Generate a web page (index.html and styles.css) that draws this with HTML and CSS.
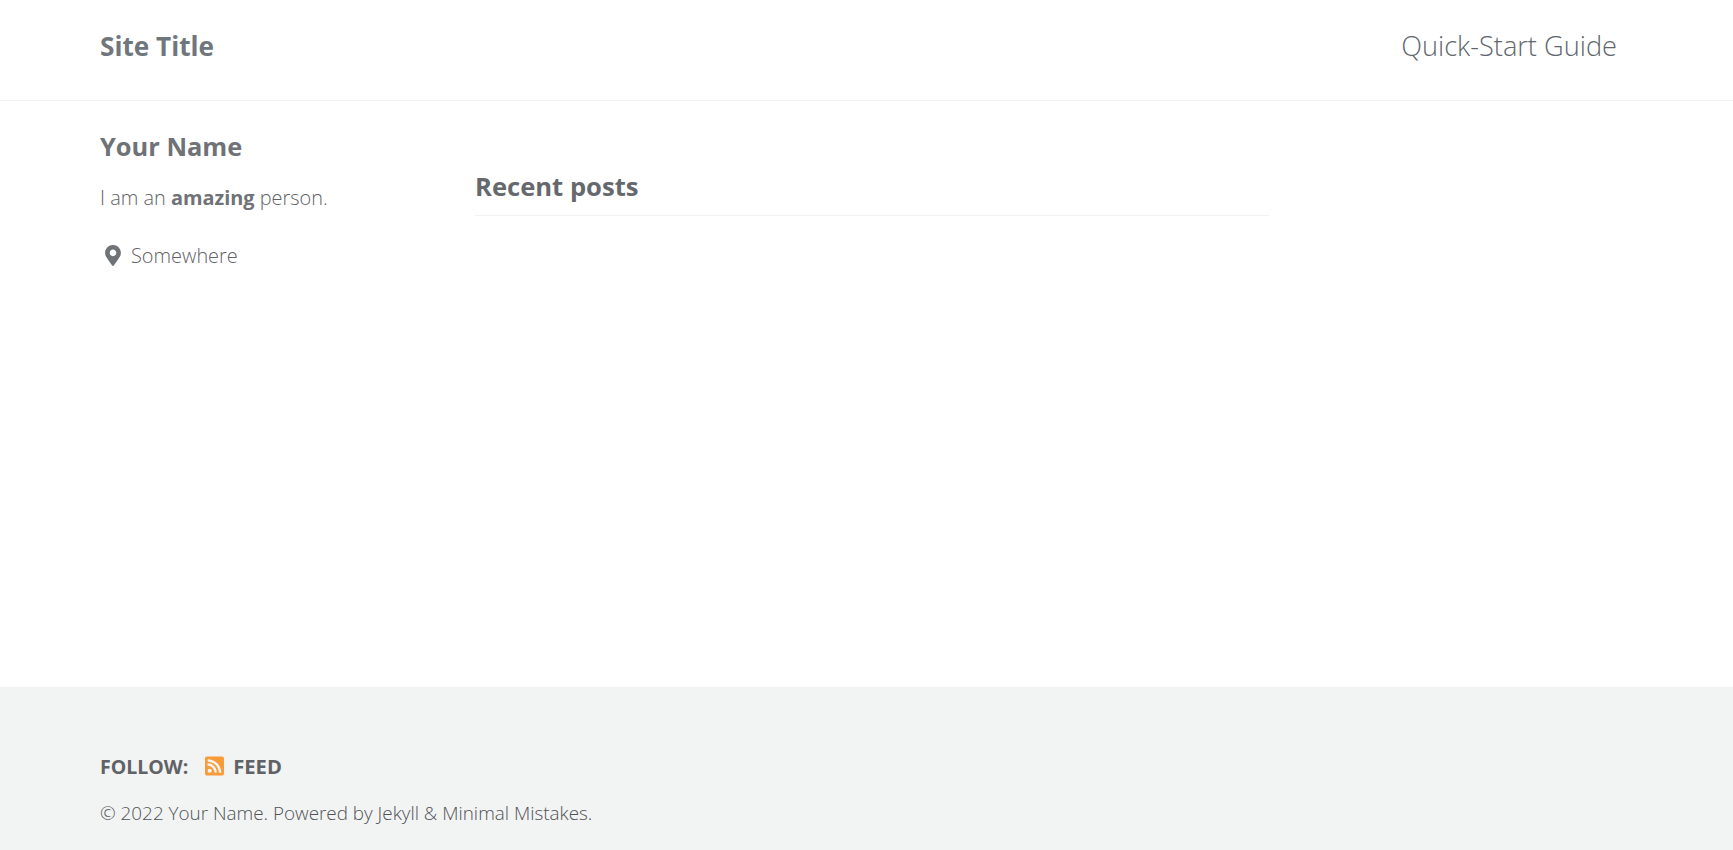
FILE: index.html
```html
<!DOCTYPE html>
<html lang="en">
<head>
<meta charset="utf-8">
<title>Your Name</title>
<link rel="stylesheet" href="styles.css">
</head>
<body>
<header class="masthead">
  <a class="site-title" href="#">Site Title</a>
  <a class="nav-link" href="#">Quick-Start Guide</a>
</header>
<div class="content">
  <aside class="sidebar">
    <h3 class="author-name">Your Name</h3>
    <p class="author-bio">I am an <strong>amazing</strong> person.</p>
    <div class="author-location">
      <svg class="pin" viewBox="0 0 384 512" aria-hidden="true"><path d="M172.3 501.7C27 291 0 269.4 0 192 0 86 86 0 192 0s192 86 192 192c0 77.400-27 99-172.300 309.700-9.500 13.800-29.900 13.800-39.400 0zM192 272c44.200 0 80-35.800 80-80s-35.800-80-80-80-80 35.800-80 80 35.800 80 80 80z"/></svg>
      <span>Somewhere</span>
    </div>
  </aside>
  <main class="main">
    <h3 class="section-title">Recent posts</h3>
  </main>
</div>
<footer class="footer">
  <div class="follow">
    <strong class="follow-label">FOLLOW:</strong>
    <a class="feed" href="#">
      <svg class="rss" viewBox="0 0 448 512" aria-hidden="true"><path d="M400 32H48C21.500 32 0 53.500 0 80v352c0 26.500 21.500 48 48 48h352c26.500 0 48-21.500 48-48V80c0-26.500-21.500-48-48-48zM112 416c-26.500 0-48-21.500-48-48s21.500-48 48-48 48 21.500 48 48-21.500 48-48 48zm157.500 0h-34.300c-6.400 0-11.700-5-12-11.400-5.200-82.400-70.900-147.800-153.100-153.100-6.400-.3-11.400-5.600-11.400-12v-34.300c0-6.900 5.800-12.400 12.700-12 111.300 6 200.100 95 206.100 206.100.4 6.900-5.100 12.700-12 12.700zm103 0h-34.300c-6.500 0-11.800-5.200-12-11.600C321.200 268.700 211.300 158.800 75.600 153.800c-6.400-.2-11.600-5.500-11.600-12v-34.300c0-6.800 5.600-12.200 12.400-12C241.700 101.300 378.600 234.900 384.500 403.600c.2 6.800-5.200 12.400-12 12.400z"/></svg>
      <span>FEED</span>
    </a>
  </div>
  <p class="copyright">© 2022 Your Name. Powered by Jekyll &amp; Minimal Mistakes.</p>
</footer>
</body>
</html>
```
FILE: styles.css
```css
* { box-sizing: border-box; }
html, body { margin: 0; padding: 0; }
body {
  height: 850px;
  display: flex;
  flex-direction: column;
  overflow: hidden;
  background: #fff;
  font-family: "Open Sans", "Noto Sans", sans-serif;
  color: #6f777d;
}
a { color: inherit; text-decoration: none; }
.masthead {
  height: 101px;
  flex: none;
  display: flex;
  align-items: center;
  justify-content: space-between;
  padding: 0 116px 9px 100px;
  border-bottom: 1px solid #f2f3f3;
}
.site-title { font-size: 26.200px; font-weight: 700; color: #6f777d; }
.nav-link { font-size: 27.200px; font-weight: 300; color: #5f676d; }
.content {
  flex: 1;
  display: flex;
  padding: 0 100px;
}
.sidebar { width: 375px; flex: none; padding-top: 32px; }
.author-name { margin: 0; font-size: 25.400px; line-height: 1.1; font-weight: 700; color: #6f7276; height: 29px; }
.author-bio { margin: 21px 0 0; font-size: 19.900px; line-height: 30px; font-weight: 300; color: #5f6266; }
.author-bio strong { font-weight: 700; color: #6f7276; }
.author-location { display: flex; align-items: center; gap: 10px; margin-top: 28px; padding-left: 5px; font-size: 19.900px; line-height: 30px; font-weight: 300; color: #5f6266; }
.pin { width: 16px; height: 21px; margin-bottom: 2px; fill: #6f7276; }
.main { width: 794px; flex: none; padding-top: 72px; }
.section-title { margin: 0; padding-bottom: 9px; height: 43px; font-size: 25.600px; line-height: 1.1; font-weight: 700; color: #65686c; border-bottom: 1px solid #f2f3f3; }
.footer { flex: none; height: 163px; background: #f2f3f3; padding: 64px 100px 0; color: #606266; }
.follow { display: flex; align-items: center; height: 30px; font-size: 19.500px; }
.follow-label { font-weight: 700; }
.feed { display: flex; align-items: center; gap: 9px; margin-left: 17px; font-size: 20.200px; font-weight: 700; }
.rss { width: 19px; height: 22px; fill: #fa9b39; }
.copyright { margin: 19px 0 0; font-size: 18.870px; line-height: 27px; font-weight: 300; color: #505256; }
```
